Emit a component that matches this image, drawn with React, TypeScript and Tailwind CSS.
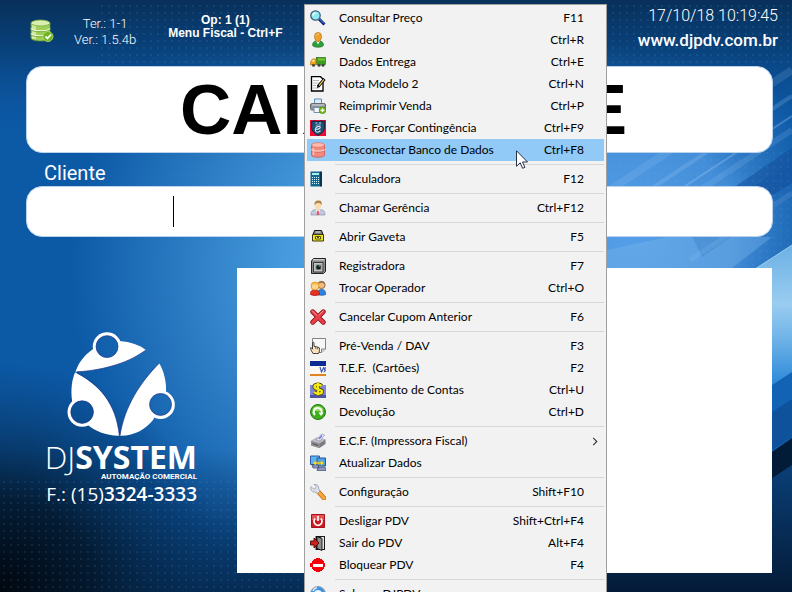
import type { ReactNode } from "react"

interface MenuEntry {
  label: string
  shortcut?: string
  icon: ReactNode
  active?: boolean
  submenu?: boolean
}

const icons = {
  search: (
    <>
      <path d="M9 9l5.500 5.500" stroke="#0a1a6e" strokeWidth="3" />
      <path d="M9.500 9l4.500 4.500" stroke="#4da3ff" strokeWidth="1" />
      <circle cx="5.500" cy="5.500" r="4.700" fill="#8feaf2" stroke="#3c5f78" strokeWidth="1.300" />
      <path d="M3 5.500C3 4 4 3 5.500 3" stroke="#fff" strokeWidth="1.300" fill="none" />
    </>
  ),
  seller: (
    <>
      <path d="M2.500 13c0-3 2.500-4.500 5.500-4.500s5.500 1.500 5.500 4.500c0 3-11 3-11 0z" fill="#2f9e3c" stroke="#1c6e28" strokeWidth=".6" />
      <path d="M6 9h4l-2 3.500z" fill="#e9f7e6" />
      <path d="M4.500 4.500a3.500 4 0 0 1 7 0c0 2.500-1.500 5-3.500 5s-3.500-2.500-3.500-5z" fill="#f0a02c" stroke="#b96a10" strokeWidth=".7" />
      <path d="M6 3.500C6.500 2 8 1.800 9 2.200" stroke="#ffd98a" strokeWidth="1" fill="none" />
    </>
  ),
  truck: (
    <>
      <rect x="6.500" y="3.500" width="9" height="7" fill="#3f9e1e" stroke="#2b7412" strokeWidth=".7" />
      <path d="M8 4.500h7v2H8z" fill="#74c840" />
      <path d="M.5 11V8l2-3h3.500v6z" fill="#f2a818" stroke="#b87608" strokeWidth=".7" />
      <path d="M1.800 7.500L3 5.800h1.500v1.700z" fill="#fdf1c0" />
      <circle cx="3.500" cy="11.300" r="1.500" fill="#444" />
      <circle cx="9" cy="11.300" r="1.500" fill="#444" />
      <circle cx="13" cy="11.300" r="1.500" fill="#444" />
    </>
  ),
  note: (
    <>
      <path d="M1.500.7h9L13 3v12H1.500z" fill="#fff" stroke="#000" strokeWidth="1.300" />
      <path d="M3 4.500h6M3 7h5M3 9.500h3M3 12h6" stroke="#b5b5b5" />
      <path d="M14.500 3L8 10.500" stroke="#000" strokeWidth="3" />
      <path d="M14 3.500L9 9.500" stroke="#e6c65a" strokeWidth="1.200" />
      <path d="M7 12l.5-2.500 1.800 1.500z" fill="#000" />
    </>
  ),
  printer: (
    <>
      <path d="M4.500 1h7v5h-7z" fill="#dcecfb" stroke="#5d8fbe" />
      <rect x=".5" y="5.500" width="15" height="6.500" rx="1.500" fill="#8e959c" stroke="#666c72" />
      <path d="M2 7h12" stroke="#d6dade" />
      <path d="M4 9.500h8v5H4z" fill="#f4f8fc" stroke="#6c8fb0" />
      <circle cx="12.500" cy="12.300" r="3.300" fill="#7cc01c" stroke="#42850c" strokeWidth=".7" />
      <path d="M12.500 10.500v3.600M10.700 12.300h3.600" stroke="#fff" strokeWidth="1.300" />
    </>
  ),
  shield: (
    <>
      <path d="M0 0h16v16H0z" fill="#f00832" />
      <path d="M1.500 1.500L5 1l3 .8L11 1l3.500.5c-.8 3 .8 5-.5 8-1 3-3.500 4.500-6 6-2.500-1.500-5-3-6-6-1.300-3 .3-5-.5-8z" fill="#1d5078" stroke="#0b2740" />
      <path d="M5.500 3h2M9 3h2" stroke="#c9dbe8" />
      <path d="M6 9.200c2.500.3 4.500-.7 4.200-2-.4-1.500-3.200-1-4.300.8-1.200 2-.3 4.200 1.600 4.200 1.300 0 2.200-.6 3-1.500" stroke="#e4eef5" strokeWidth="1.100" fill="none" />
      <path d="M5 6.500C6 5 8 4.500 11 5" stroke="#8fb2cb" strokeWidth=".9" />
    </>
  ),
  redDatabase: (
    <>
      <path d="M1.500 3v10c0 3 13 3 13 0V3z" fill="#f08a7d" stroke="#d4574d" strokeWidth=".8" />
      <ellipse cx="8" cy="3" rx="6.500" ry="2.300" fill="#ffbcae" stroke="#de6a5f" strokeWidth=".7" />
      <path d="M1.500 7.500c1 2.200 12 2.200 13 0" stroke="#ffe5df" strokeWidth="1.200" fill="none" />
      <path d="M1.500 8.500c1 2.200 12 2.200 13 0" stroke="#d4574d" strokeWidth=".7" fill="none" />
      <path d="M3.500 6v7" stroke="#ffbfb3" strokeWidth="1.500" />
    </>
  ),
  calculator: (
    <>
      <path d="M.5.500h10v15H.5z" fill="#12698f" />
      <path d="M10 .5h2v15h-2z" fill="#0a3450" />
      <path d="M2 2h7v2H2z" fill="#a5efe6" />
      <path d="M2 6.500h8M2 8.500h8M2 10.500h8M2 12.500h8" stroke="#d8f4ff" strokeDasharray="1 1" />
    </>
  ),
  manager: (
    <>
      <path d="M1 15c0-4.500 2-5.500 7-5.500s7 1 7 5.500z" fill="#c3c9dc" stroke="#8d94ad" strokeWidth=".7" />
      <path d="M5.500 9.500h5L8 14z" fill="#fff" />
      <path d="M7.300 10.500h1.400l.6 4.500H6.700z" fill="#e2566a" />
      <ellipse cx="8" cy="5.500" rx="3" ry="4" fill="#fbdcae" />
      <path d="M4.500 5.500C4 .5 7 .2 9 .5c3 0 3 3 2.500 5-.5-2-2-2.500-3.500-2.500S5 4 4.500 5.500z" fill="#b2854a" />
    </>
  ),
  drawer: (
    <>
      <path d="M4.500 1.500h7l1.500 4H3z" fill="#777" stroke="#111" />
      <path d="M5.500 3h5" stroke="#eee" />
      <path d="M2.500 5.500h11v6.500h-11z" fill="#e9e21c" stroke="#3b3a06" />
      <path d="M5.500 7.500h5v2.500h-5z" fill="#fff96a" stroke="#55520a" />
      <path d="M7 8.500h2" stroke="#55520a" />
    </>
  ),
  register: (
    <>
      <path d="M1.500 3l2-2.500h12v13l-2 2h-12z" fill="#8a8a8a" stroke="#222" />
      <path d="M3 1.800h11.500" stroke="#e8e8e8" />
      <path d="M3.500 4.500h9.500v9.500H3.500z" fill="#c4c4c4" stroke="#3c3c3c" />
      <path d="M5.500 6.500h6V12h-6z" fill="#8b8b8b" />
      <circle cx="8.500" cy="9.300" r="2.200" fill="#0b1f1c" />
      <path d="M8.500 8h1.500" stroke="#46dd94" />
    </>
  ),
  users: (
    <>
      <path d="M7.500 14.500c0-4 1.500-5 4.200-5s4 1.500 4 5c-2 1-6 1-8.200 0z" fill="#2c83e4" stroke="#1551a6" strokeWidth=".7" />
      <circle cx="11.500" cy="5" r="3.600" fill="#f3bd7e" stroke="#7b4c22" strokeWidth=".8" />
      <path d="M8 4c.5-4 6.500-4.500 7.200.5-2-1.500-4.500-2-7.200-.5z" fill="#9a7350" />
      <path d="M.5 14.500c0-4 1.500-4.500 4.500-4.500s4.500 1.500 4.500 4.500c-2 1.300-7 1.300-9 0z" fill="#e8321e" stroke="#a3160c" strokeWidth=".7" />
      <circle cx="5" cy="6" r="4" fill="#fbd68f" stroke="#d98a1c" strokeWidth=".8" />
      <path d="M1 5.500c.5-4.500 7-5 8 0-2-1.500-5-2-8 0z" fill="#f7b137" />
    </>
  ),
  cancel: (
    <>
      <path d="M2.700 2.700l10.600 10.600M13.300 2.700L2.700 13.300" stroke="#8f0d12" strokeWidth="4.800" strokeLinecap="round" />
      <path d="M2.700 2.700l10.600 10.600M13.300 2.700L2.700 13.300" stroke="#e8404a" strokeWidth="3.200" strokeLinecap="round" />
      <path d="M2.500 2l4 4M13 2L9.500 5.500" stroke="#ff9a98" strokeWidth="1" strokeLinecap="round" />
    </>
  ),
  presale: (
    <>
      <path d="M2.500.5h13V11l-4 3.500h-9z" fill="#f7f7f7" stroke="#777" strokeWidth=".9" />
      <path d="M11.500 14.500V11h4" fill="#ddd" stroke="#777" strokeWidth=".9" />
      <path d="M2.500 5v6L.8 9.500C-.2 10 1 12 3 15.500h5.500c1-2 1-3 1-5.500l-1.500-.8-1.500-.5L4 8.300V5c0-1-1.500-1-1.500 0z" fill="#fbe1bd" stroke="#222" strokeWidth=".8" />
      <path d="M5.800 9v2M7.700 9.500v1.800" stroke="#222" strokeWidth=".7" />
    </>
  ),
  card: (
    <>
      <path d="M0 0h16v16H0z" fill="#fbf7f5" />
      <path d="M0 1h16v5H0z" fill="#0a2a94" />
      <path d="M10 7l1.500 5 2.500-5M15.800 7.500l-1.600 1.500 1.200 1.300-1.500 1.700" stroke="#3c58ad" strokeWidth="1.200" fill="none" />
      <path d="M0 14h16v2H0z" fill="#e08420" />
    </>
  ),
  money: (
    <>
      <path d="M0 3h16v13H0z" fill="#8088d8" />
      <path d="M0 13h16v3H0z" fill="#4e54a5" />
      <path d="M11.500 4C10 2 4.500 2 4.500 4.800c0 3 7.500 2 7.500 4.700 0 2.800-6 2.800-8 .5M8 .8v12.500" stroke="#4a4200" strokeWidth="4" fill="none" />
      <path d="M11.500 4C10 2 4.500 2 4.500 4.800c0 3 7.500 2 7.500 4.700 0 2.800-6 2.800-8 .5M8 .8v12.500" stroke="#f5e914" strokeWidth="2.400" fill="none" />
    </>
  ),
  refund: (
    <>
      <circle cx="8" cy="8" r="7.500" fill="#3fae1e" stroke="#1f7a0e" strokeWidth="1" />
      <path d="M2.500 6a5.800 5.800 0 0 1 11 0c-3 1.500-7 2-11 0z" fill="#8fdd63" />
      <path d="M5 11a4 4 0 1 1 6.500-2" stroke="#fff" strokeWidth="1.900" fill="none" />
      <path d="M8.500 8.500h5L11 12z" fill="#fff" />
    </>
  ),
  fiscalPrinter: (
    <>
      <path d="M1 8l6-3.500 8.500 2v4.500l-6 4L1 12.500z" fill="#7c7c7e" />
      <path d="M1 8l6-3.500 8.500 2-6 4z" fill="#bdbdc0" />
      <path d="M9.500 10.500v4.500L1 12.500V8z" fill="#919194" />
      <path d="M6.500 7l5-6 3 1-4.500 6z" fill="#eef0ff" stroke="#7d83b8" strokeWidth=".6" />
      <path d="M9 6l3-3.500" stroke="#6a70d8" strokeWidth="1.200" />
      <path d="M2.500 10.500l5.500 2" stroke="#4b4b4d" />
    </>
  ),
  sync: (
    <>
      <path d="M.5 1h9v8.500h-9z" fill="#59b4f5" stroke="#315c9e" />
      <path d="M7 3h8.500v8H7z" fill="#4a9fe8" stroke="#2d5390" />
      <path d="M2 10h6l1 3H3zM8 12h7l1 3.500H7z" fill="#8c97bd" stroke="#424c77" strokeWidth=".7" />
      <path d="M3 8l3-2.500v1.700h5V5.500L14 8l-3 2.500V8.800H6v1.700z" fill="#ffe12b" stroke="#c9a30e" strokeWidth=".5" />
    </>
  ),
  wrench: (
    <>
      <path d="M8.500 8l5.500 6" stroke="#b9640a" strokeWidth="4.600" strokeLinecap="round" />
      <path d="M8.500 8l5.500 6" stroke="#f9a73a" strokeWidth="3.200" strokeLinecap="round" />
      <path d="M1 2.500L3.500 5l2-.5L6 2.500 4 .5c3-.5 5 1 4.700 4L10 7 7.500 9.500 5 8C2.500 8.500 0 6 1 2.500z" fill="#dce1ea" stroke="#949cab" strokeWidth=".8" />
    </>
  ),
  power: (
    <>
      <path d="M1.500 1.500h13v13h-13z" fill="#d01820" stroke="#a8121a" />
      <path d="M2 2h12v5H2z" fill="#e55453" />
      <path d="M5.200 5.500a4 4 0 1 0 5.600 0M8 3v5" stroke="#fff" strokeWidth="1.700" fill="none" />
    </>
  ),
  exit: (
    <>
      <path d="M5.500 1h9.500v14H5.500z" fill="#1b1b1b" />
      <path d="M11 2h3v12h-3z" fill="#e2e2e2" />
      <path d="M7 1.500l5 2v12l-5-2z" fill="#8d8f8d" stroke="#000" strokeWidth=".8" />
      <path d="M.5 6H4V3l5 5-5 5v-3H.5z" fill="#c8261c" stroke="#4c0400" strokeWidth=".9" />
    </>
  ),
  block: (
    <>
      <path d="M6 1h4v1h2v1h1v1h1v2h1v4h-1v2h-1v1h-1v1h-2v1H6v-1H4v-1H3v-1H2v-2H0V6h2V4h1V3h1V2h2z" fill="#f50008" />
      <path d="M3 7h10v3H3z" fill="#fff" />
    </>
  ),
  about: (
    <>
      <circle cx="8" cy="8" r="7.500" fill="#3d94dc" stroke="#8d9fb3" />
      <circle cx="8" cy="8" r="4" fill="#eaf5ff" />
      <path d="M3 5a6 6 0 0 1 4-3.500" stroke="#dbeeff" strokeWidth="1.500" fill="none" />
    </>
  ),
}

const groups: MenuEntry[][] = [
  [
    { label: "Consultar Preço", shortcut: "F11", icon: icons.search },
    { label: "Vendedor", shortcut: "Ctrl+R", icon: icons.seller },
    { label: "Dados Entrega", shortcut: "Ctrl+E", icon: icons.truck },
    { label: "Nota Modelo 2", shortcut: "Ctrl+N", icon: icons.note },
    { label: "Reimprimir Venda", shortcut: "Ctrl+P", icon: icons.printer },
    { label: "DFe - Forçar Contingência", shortcut: "Ctrl+F9", icon: icons.shield },
    { label: "Desconectar Banco de Dados", shortcut: "Ctrl+F8", icon: icons.redDatabase, active: true },
  ],
  [{ label: "Calculadora", shortcut: "F12", icon: icons.calculator }],
  [{ label: "Chamar Gerência", shortcut: "Ctrl+F12", icon: icons.manager }],
  [{ label: "Abrir Gaveta", shortcut: "F5", icon: icons.drawer }],
  [
    { label: "Registradora", shortcut: "F7", icon: icons.register },
    { label: "Trocar Operador", shortcut: "Ctrl+O", icon: icons.users },
  ],
  [{ label: "Cancelar Cupom Anterior", shortcut: "F6", icon: icons.cancel }],
  [
    { label: "Pré-Venda / DAV", shortcut: "F3", icon: icons.presale },
    { label: "T.E.F.  (Cartões)", shortcut: "F2", icon: icons.card },
    { label: "Recebimento de Contas", shortcut: "Ctrl+U", icon: icons.money },
    { label: "Devolução", shortcut: "Ctrl+D", icon: icons.refund },
  ],
  [
    { label: "E.C.F. (Impressora Fiscal)", icon: icons.fiscalPrinter, submenu: true },
    { label: "Atualizar Dados", icon: icons.sync },
  ],
  [{ label: "Configuração", shortcut: "Shift+F10", icon: icons.wrench }],
  [
    { label: "Desligar PDV", shortcut: "Shift+Ctrl+F4", icon: icons.power },
    { label: "Sair do PDV", shortcut: "Alt+F4", icon: icons.exit },
    { label: "Bloquear PDV", shortcut: "F4", icon: icons.block },
  ],
  [{ label: "Sobre o DJPDV", icon: icons.about }],
]

function MenuRow({ label, shortcut, icon, active, submenu }: MenuEntry) {
  return (
    <button
      type="button"
      role="menuitem"
      className={`flex h-[22px] w-full items-center pl-[3px] text-left ${active ? "bg-[#91c9f7]" : ""}`}
    >
      <svg viewBox="0 0 16 16" className="size-4 shrink-0" fill="none" aria-hidden="true">
        {icon}
      </svg>
      <span className="ml-[13px] flex-1 whitespace-pre">{label}</span>
      {shortcut && <span className="mr-5">{shortcut}</span>}
      {submenu && (
        <svg viewBox="0 0 6 10" className="mr-1.5 h-[9px] w-[6px]" fill="none" aria-hidden="true">
          <path d="M1 1l4 4-4 4" stroke="#333" strokeWidth="1.200" />
        </svg>
      )}
    </button>
  )
}

function ContextMenu() {
  return (
    <div
      role="menu"
      className="absolute top-1 left-[304px] w-[303px] border border-[#a0a0a0] bg-[#f2f2f2] p-0.5 font-['Lato',sans-serif] text-[12px] text-black"
    >
      {groups.map((group, index) => (
        <div key={index}>
          {index > 0 && <div role="separator" className="my-[3px] ml-7 h-px bg-[#d7d7d7]" />}
          {group.map((entry) => (
            <MenuRow key={entry.label} {...entry} />
          ))}
        </div>
      ))}
    </div>
  )
}

function Backdrop() {
  return (
    <svg
      viewBox="0 0 792 592"
      preserveAspectRatio="none"
      className="absolute inset-0 -z-10 h-full w-full"
      aria-hidden="true"
    >
      <defs>
        <radialGradient id="glow" gradientUnits="userSpaceOnUse" cx="400" cy="270" r="330">
          <stop offset="0" stopColor="#5aaef2" />
          <stop offset=".35" stopColor="#479add" />
          <stop offset="1" stopColor="#0c59a6" />
        </radialGradient>
        <radialGradient id="glowRight" gradientUnits="userSpaceOnUse" cx="630" cy="235" r="210">
          <stop offset="0" stopColor="#559fe8" />
          <stop offset=".5" stopColor="#4a94de" stopOpacity=".9" />
          <stop offset="1" stopColor="#2f7bc8" stopOpacity="0" />
        </radialGradient>
        <linearGradient id="top" x1="0" y1="0" x2="0" y2="1">
          <stop offset="0" stopColor="#08305a" />
          <stop offset=".35" stopColor="#083d73" stopOpacity=".9" />
          <stop offset="1" stopColor="#0c4f96" stopOpacity="0" />
        </linearGradient>
        <linearGradient id="bottom" x1="0" y1="0" x2="0" y2="1">
          <stop offset="0" stopColor="#05264a" stopOpacity="0" />
          <stop offset="1" stopColor="#05264a" stopOpacity=".9" />
        </linearGradient>
        <radialGradient id="corner" gradientUnits="userSpaceOnUse" cx="0" cy="592" r="230">
          <stop offset="0" stopColor="#01070f" />
          <stop offset=".4" stopColor="#031527" stopOpacity=".85" />
          <stop offset="1" stopColor="#06305a" stopOpacity="0" />
        </radialGradient>
        <linearGradient id="beam" gradientUnits="userSpaceOnUse" x1="0" y1="250" x2="0" y2="385">
          <stop offset="0" stopColor="#6fb3e6" />
          <stop offset=".4" stopColor="#9accf0" />
          <stop offset=".65" stopColor="#70b4e8" />
          <stop offset="1" stopColor="#2b88d8" />
        </linearGradient>
        <linearGradient id="deep" gradientUnits="userSpaceOnUse" x1="0" y1="465" x2="0" y2="592">
          <stop offset="0" stopColor="#0a3f77" />
          <stop offset="1" stopColor="#041b38" />
        </linearGradient>
        <pattern id="dots" width="7" height="7" patternUnits="userSpaceOnUse">
          <rect x="3" y="5" width="2" height="2" fill="#6aa5dd" fillOpacity=".12" />
        </pattern>
      </defs>
      <rect width="792" height="592" fill="url(#glow)" />
      <rect x="400" width="392" height="450" fill="url(#glowRight)" />
      <rect width="792" height="130" fill="url(#top)" />
      <rect y="450" width="792" height="142" fill="url(#bottom)" />
      <rect width="300" height="592" fill="url(#corner)" />
      <path d="M690 232L792 160v35l-90 62z" fill="#1a5fb0" fillOpacity=".4" />
      <path d="M730 190l62-42v35l-70 44z" fill="#0f4a96" fillOpacity=".5" />
      <g stroke="#a9d0f5" fill="none">
        <path d="M640 196L792 96" strokeOpacity=".2" strokeWidth="4" />
        <path d="M670 196l122-80" strokeOpacity=".3" strokeWidth="2" />
        <path d="M610 190L792 70" strokeOpacity=".15" strokeWidth="8" />
        <path d="M690 260l102-67" strokeOpacity=".15" strokeWidth="5" />
        <path d="M700 190l92-60" strokeOpacity=".15" strokeWidth="6" />
      </g>
      <path d="M607 268v-18l60-13h105l-40 31z" fill="#7dbbec" fillOpacity=".35" />
      <path d="M730 285l62-40v150h-62z" fill="url(#beam)" />
      <path d="M752 271l40-26" stroke="#b8dcf6" strokeOpacity=".7" />
      <path d="M760 393l32-21v80h-32z" fill="#1263b4" />
      <path d="M760 420l32-21v38l-32 21z" fill="#0f529c" />
      <path d="M760 460l32-22v40h-32z" fill="#021c37" />
      <path d="M607 592V573l153-87 32-21v127z" fill="url(#deep)" />
      <rect x="100" width="692" height="66" fill="url(#dots)" />
      <rect x="607" y="150" width="185" height="118" fill="url(#dots)" />
      <rect y="478" width="237" height="114" fill="url(#dots)" />
      <rect x="237" y="573" width="370" height="19" fill="url(#dots)" />
    </svg>
  )
}

function Header() {
  return (
    <header className="flex h-[66px] shrink-0 items-start pr-3.5 pl-[30px] text-white">
      <svg viewBox="0 0 24 24" className="mt-[19px] size-6" aria-hidden="true">
        <path d="M1 4v15c0 4 19 4 19 0V4z" fill="#9fcf5a" stroke="#5f9632" strokeWidth=".8" />
        <path d="M3 6v14M5 6v14" stroke="#dff2b4" strokeWidth="1.500" />
        <ellipse cx="10.500" cy="4" rx="9.500" ry="3" fill="#d9efaf" stroke="#7bb040" strokeWidth=".8" />
        <path d="M1 9.500c1 3 18 3 19 0M1 14.500c1 3 18 3 19 0" fill="none" stroke="#f1fadd" strokeWidth="1.200" />
        <path d="M1 10.500c1 3 18 3 19 0M1 15.500c1 3 18 3 19 0" fill="none" stroke="#6ca23b" strokeWidth=".8" />
        <circle cx="18" cy="17.500" r="5" fill="#6cb51c" stroke="#a7d960" />
        <path d="M15.500 17.500l2 2 3.500-4" fill="none" stroke="#fff" strokeWidth="1.800" />
      </svg>
      <div className="mt-4 ml-5 text-center font-['Roboto',sans-serif] text-[13px] leading-4 font-light">
        <p>Ter.: 1-1</p>
        <p>Ver.: 1.5.4b</p>
      </div>
      <div className="mt-3.5 ml-8 text-center font-['Liberation_Sans',Arial,sans-serif] text-[12px] leading-[13px] font-bold">
        <p>Op: 1 (1)</p>
        <p>Menu Fiscal - Ctrl+F</p>
      </div>
      <div className="mt-1 ml-auto text-right font-['Roboto',sans-serif]">
        <p className="text-[16px] leading-6 font-light">17/10/18 10:19:45</p>
        <p className="text-[17px] leading-6 font-medium">www.djpdv.com.br</p>
      </div>
    </header>
  )
}

function Logo() {
  return (
    <div className="mt-[62px] ml-[46px] w-[151px] text-white">
      <svg viewBox="140 30 330 325" className="ml-5 h-[108px] w-[110px]" role="img" aria-label="DJSystem">
        <mask id="heads">
          <rect x="140" y="30" width="330" height="325" fill="#fff" />
          <circle cx="263" cy="80" r="33" fill="#000" />
          <circle cx="188" cy="277" r="34" fill="#000" />
          <circle cx="424" cy="254" r="33" fill="#000" />
        </mask>
        <g fill="#fff" mask="url(#heads)">
          <path d="M168 156C178 125 196 106 220 88L300 63C335 66 360 75 380 90 335 124 265 150 168 156z" />
          <path d="M167 157C240 195 290 250 300 348 262 349 225 333 205 316L158 245C153 210 157 180 167 157z" />
          <path d="M420 130C365 185 315 260 302 348 345 349 380 328 402 300L440 222C443 190 435 155 420 130z" />
          <circle cx="263" cy="80" r="43" />
          <circle cx="188" cy="277" r="44" />
          <circle cx="424" cy="255" r="43" />
        </g>
        <g fill="none" stroke="#1c2f86" strokeWidth="2">
          <path d="M380 90C335 124 265 150 172 156M172 159C240 195 290 250 300 348M420 130C365 185 315 260 302 348" />
          <circle cx="263" cy="80" r="33" />
          <circle cx="188" cy="277" r="34" />
          <circle cx="424" cy="254" r="33" />
        </g>
      </svg>
      <div className="mt-1 flex flex-col items-end font-['Open_Sans','Noto_Sans',sans-serif] whitespace-nowrap">
        <p className="text-[32px] leading-[30px] font-light">
          DJ<b className="font-bold">SYSTEM</b>
        </p>
        <p className="font-['Roboto',sans-serif] text-[8px] leading-[10px] font-bold">AUTOMAÇÃO COMERCIAL</p>
        <p className="text-[19px] leading-6">
          F.: (15)<b className="font-semibold">3324-3333</b>
        </p>
      </div>
    </div>
  )
}

export default function App() {
  return (
    <div className="relative isolate flex h-screen flex-col overflow-hidden bg-[#0c59a6]">
      <Backdrop />
      <Header />
      <main className="flex min-h-0 flex-1 flex-col pr-5 pb-[19px]">
        <h1 className="-mr-px ml-[26px] flex h-[87px] shrink-0 items-center justify-center rounded-2xl border border-[#b9d3ee] bg-white pl-2 font-['Liberation_Sans',Arial,sans-serif] text-[71px] leading-none font-bold text-black">
          CAIXA LIVRE
        </h1>
        <label htmlFor="cliente" className="ml-11 h-[33px] shrink-0 pt-1.5 font-['Roboto',sans-serif] text-[20px] leading-7 text-white">
          Cliente
        </label>
        <div className="relative -mr-px ml-[26px] shrink-0">
          <input
            id="cliente"
            type="text"
            className="block h-[51px] w-full rounded-2xl border border-[#b9d3ee] bg-white px-4 text-[28px] outline-none"
          />
          <span className="absolute top-2.5 left-[147px] h-[31px] w-px bg-black" />
        </div>
        <div className="mt-[31px] flex min-h-0 flex-1">
          <aside className="w-[237px] shrink-0">
            <Logo />
          </aside>
          <section aria-label="Cupom" className="flex-1 bg-white" />
        </div>
      </main>
      <ContextMenu />
      <svg viewBox="0 0 12 19" className="absolute top-[150px] left-[516px] h-[19px] w-3" aria-hidden="true">
        <path d="M.5.800v15.500l3.700-3.500 2.400 5.500 2.300-1-2.400-5.300h5z" fill="#fff" stroke="#111b33" strokeWidth=".9" />
      </svg>
    </div>
  )
}
